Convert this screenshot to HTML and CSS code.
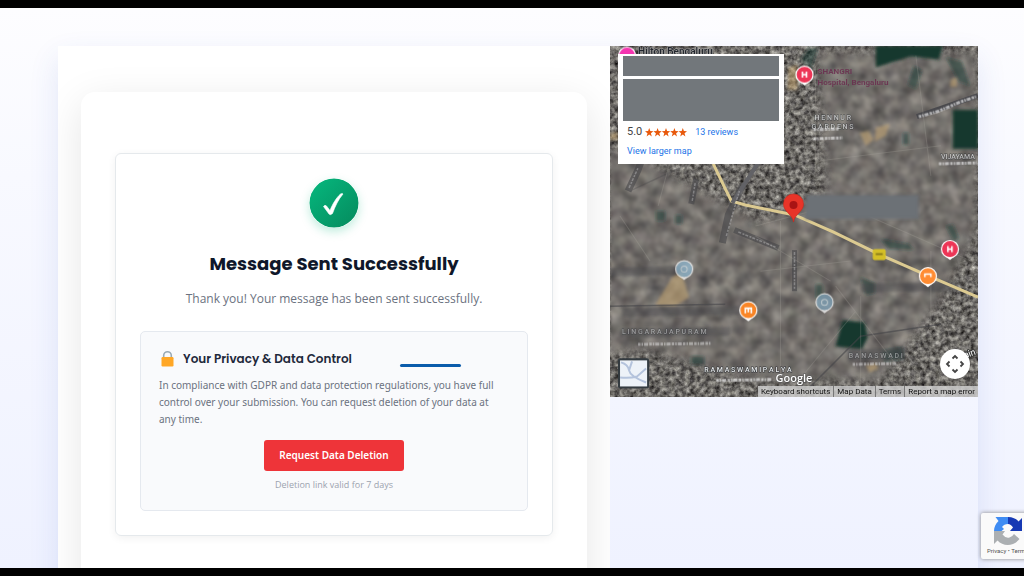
FILE: index.html
```html
<!DOCTYPE html>
<html lang="en">
<head>
<meta charset="utf-8">
<meta name="viewport" content="width=device-width, initial-scale=1">
<title>Message Sent Successfully</title>
<link rel="stylesheet" href="styles.css">
</head>
<body>
<main class="page">
  <div class="contact">
    <section class="form-column">
      <div class="form-card">
        <div class="message-card">
          <svg class="success-icon" viewBox="0 0 50 50" aria-hidden="true">
            <defs><linearGradient id="green" x1="0" y1="0" x2="1" y2="1"><stop offset="0" stop-color="#06b87e"/><stop offset="1" stop-color="#058a5d"/></linearGradient></defs>
            <circle cx="25" cy="25" r="24.5" fill="url(#green)"/>
            <path d="M14.500 28.500Q16 26.500 17.500 28L21 32.500C23.500 26 27.500 19.500 31.500 16Q33.500 14.800 34 16C29.500 21 26 28.500 23.500 35.500Q21.500 37.500 20 36Z" fill="#fff" stroke="#fff" stroke-width=".6" stroke-linejoin="round"/>
          </svg>
          <h1 class="title">Message Sent Successfully</h1>
          <p class="subtitle">Thank you! Your message has been sent successfully.</p>
          <section class="privacy">
            <h2 class="privacy-title">
              <svg class="lock" viewBox="0 0 16 18" aria-hidden="true"><path d="M4.200 8V5.500a3.800 3.800 0 0 1 7.600 0V8" fill="none" stroke="#9aaab5" stroke-width="1.600"/><rect x="2" y="7" width="12" height="9.500" rx="1.200" fill="#ffa726"/></svg>
              <span>Your Privacy &amp; Data Control</span>
            </h2>
            <p class="privacy-text">In compliance with GDPR and data protection regulations, you have full control over your submission. You can request deletion of your data at any time.</p>
            <button class="delete-button" type="button">Request Data Deletion</button>
            <p class="note">Deletion link valid for 7 days</p>
          </section>
        </div>
      </div>
    </section>
    <aside class="map-column">
      <div class="map">
        <svg class="map-canvas" viewBox="0 0 367 351" preserveAspectRatio="xMidYMid slice" role="img" aria-label="Satellite map">
          <defs>
            <filter id="fine" x="0" y="0" width="1" height="1" color-interpolation-filters="sRGB">
              <feTurbulence type="fractalNoise" baseFrequency=".2" numOctaves="3" seed="8"/>
              <feColorMatrix values=".85 .2 0 0 -.1 .85 .2 0 0 -.11 .8 .22 0 0 -.11 0 0 0 0 1"/>
              <feGaussianBlur stdDeviation=".5"/>
            </filter>
            <filter id="coarse" x="0" y="0" width="1" height="1" color-interpolation-filters="sRGB">
              <feTurbulence type="fractalNoise" baseFrequency=".08" numOctaves="3" seed="21"/>
              <feColorMatrix values=".4 .12 0 0 .19 .4 .09 0 0 .19 .36 .09 .03 0 .18 0 0 0 0 1"/>
              <feGaussianBlur stdDeviation="1.600"/>
            </filter>
            <filter id="soft" x="-20%" y="-20%" width="140%" height="140%"><feGaussianBlur stdDeviation="1.500"/></filter>
            <filter id="slight" x="-20%" y="-20%" width="140%" height="140%"><feGaussianBlur stdDeviation=".6"/></filter>
            <filter id="edge" x="-20%" y="-20%" width="140%" height="140%"><feGaussianBlur stdDeviation="5"/></filter>
            <mask id="hazy"><g fill="#fff" filter="url(#edge)"><path d="M205 5H367V185L330 255L270 335L140 335L35 305L-10 310V100L30 110L150 175L215 145Z"/></g></mask>
            <g id="pin"><path d="M-5 7L0 11L5 7Z" fill="#fff"/><circle r="8.500" stroke="#fff" stroke-width="1.200"/></g>
          </defs>
          <rect width="367" height="351" filter="url(#fine)"/>
          <g mask="url(#hazy)"><rect width="367" height="351" filter="url(#coarse)"/></g>
          <g fill="#19382f" filter="url(#soft)">
            <path d="M265 0H332L328 14L300 11L265 22ZM342 64H367V103H342ZM232 274L254 276L257 291L251 303L225 300Z"/>
            <g opacity=".5"><path d="M205 238H212V252H205ZM44 94l9 2-3 9-8-2ZM155 92l10 3-2 11-9-3ZM270 193L298 198L303 204L278 203ZM190 14l8-12h10l-8 23ZM292 87h6v12h-6ZM46 165h9v10h-9ZM65 169h7v9h-7ZM250 231l14 6v10l-9 2ZM335 12l16 4 8 24-11-4ZM303 20l8 5-6 18-8-4ZM81 310h13v8H81ZM272 304l20-3v12l-18 2ZM335 180l7-2 6 14-5 4Z"/></g>
          </g>
          <g fill="#c8a873" opacity=".55" filter="url(#soft)"><path d="M62 231l9-6 8 26-14 9-20-1ZM178 22l9-3v25h-10ZM265 82l14-4-4 12-11 6ZM0 88l8-2v8H0ZM249 87l9-2 5 9-8 6ZM340 34l6-2v9h-7ZM255 319l10-2 3 5-9 4Z"/></g>
          <g fill="none" stroke="#454548" opacity=".6" filter="url(#slight)">
            <path d="M20 145L85 115L134 128L159 88L205 45" stroke-width="1.500" opacity=".5"/>
            <path d="M18 145L28 124L33 110" stroke-width="7"/>
            <path d="M112 197L118 169L133 138" stroke-width="7"/>
            <path d="M81 158L86 133M124 184L168 202" stroke-width="6"/>
            <path d="M184 204V245" stroke-width="5"/>
            <path d="M198 342L250 290L330 278M0 260L115 258" stroke-width="1.500"/>
          </g>
          <g fill="none" stroke="#424247" opacity=".45" filter="url(#soft)">
            <path d="M0 226L70 224M250 242L345 240" stroke-width="9"/>
            <path d="M12 266L130 264M10 287L120 285" stroke-width="9"/>
            <path d="M238 309L295 307" stroke-width="12"/>
          </g>
          <path d="M306 71L367 50" stroke="#4a4a4e" stroke-width="5" filter="url(#slight)"/>
          <g fill="none" stroke="#aaa79f" opacity=".25" stroke-width="1" filter="url(#slight)"><path d="M205 20V125M235 160L367 218M225 240L310 350M175 350L245 265M10 170L40 215M100 95L180 60M305 10L320 130M210 115L330 100M250 250V340M320 205V344M145 190L220 235M145 180L220 160M60 115L48 160M170 175V330M150 225L240 215"/></g>
          <path d="M103 118L115 143L121 155L135 159L184 169L223 186L268 208L318 230L367 251" fill="none" stroke="#dcca91" stroke-width="3" filter="url(#slight)"/>
          <path d="M122 157L160 98" stroke="#626266" stroke-width="4" filter="url(#slight)"/>
          <g fill="none" stroke="#d9d9db" stroke-width="1.500" stroke-dasharray="3 1.500 2 1" opacity=".35" filter="url(#slight)">
            <path d="M19 142L28 122M116 190L129 145M82 155L85 137M128 186L165 201M184 206V243"/>
          </g>
          <g class="map-place" filter="url(#slight)">
            <text class="place-dark" x="28" y="9">Hilton Bengaluru</text>
            <g opacity=".65"><text x="204" y="74">H E N N U R</text><text x="201" y="83">G A R D E N S</text><text x="330" y="113">VIJAYAMA</text></g>
            <g opacity=".45"><text x="12" y="288">L I N G A R A J A P U R A M</text><text x="238" y="312">B A N A S W A D I</text></g>
            <text x="94" y="326">R A M A S W A M I P A L Y A</text>
          </g>
          <g fill="none" stroke="#eeeeef" stroke-width="3" stroke-dasharray="2.500 1 1.500 1 4 1.200" opacity=".65" filter="url(#slight)">
            <path d="M203 84L229 83M203 93L232 92M328 118L366 117"/>
            <path d="M28 298L101 297M242 318L286 317" opacity=".7"/>
            <path d="M106 334L162 333M308 71L326 66L350 56L365 51"/>
          </g>
          <g fill="#6b2c4e" opacity=".8" filter="url(#slight)"><text class="hotel" x="207" y="28">SHANGRI</text><text class="hotel" x="207" y="39">Hospital, Bengaluru</text></g>
          <g filter="url(#slight)">
            <use href="#pin" x="17" y="10" fill="#f536b0"/>
            <use href="#pin" x="194" y="29" fill="#ed3657"/>
            <use href="#pin" x="339" y="203" fill="#ed3657"/>
            <use href="#pin" x="317" y="230" fill="#ff8c31"/>
            <use href="#pin" x="138" y="264" fill="#f98525"/>
            <g opacity=".75"><use href="#pin" x="214" y="256" fill="#7ca1b7"/><use href="#pin" x="74" y="223" fill="#8db4cc"/><circle cx="214" cy="256" r="3" fill="none" stroke="#d7e6ed"/><circle cx="74" cy="223" r="3" fill="none" stroke="#d7e6ed"/></g>
            <g fill="none" stroke="#fff" stroke-width="1.600"><path d="M192 26v6M196 26v6M192 29h4M337 200v6M341 200v6M337 203h4"/><path d="M135 267v-5h6v5M138 262v4M314 231v-3h6v3"/></g>
            <rect x="262" y="203" width="13" height="11" rx="2" fill="#d4bf28"/><path d="M265 208h7" stroke="#8c7e1b" stroke-width="2"/>
          </g>
          <rect x="195" y="149" width="113" height="24" fill="#6c7176" filter="url(#soft)"/>
          <path d="M183 176C182 168 173 166 173 158a10 10 0 0 1 20 0c0 8-9 10-10 18Z" fill="#e83428" stroke="#c9271d" stroke-width=".6"/><circle cx="183" cy="159" r="4" fill="#a91314"/>
          <g><rect x="8" y="312" width="31" height="30" rx="2" fill="#343b40"/><rect x="10" y="314" width="27" height="26" fill="#edf2f8"/><path d="M11 316q7 2 8 8t17 12M19 324l3-9M10 331q10 1 17-1l9-8" fill="none" stroke="#b4c3dc" stroke-width="2"/></g>
          <text class="google" x="165" y="336">Google</text>
          <text class="road-name" x="354" y="312" transform="rotate(-20 354 312)">ain</text>
        </svg>
        <div class="place-card">
          <div class="redacted redacted-name"></div>
          <div class="redacted redacted-address"></div>
          <div class="rating"><span>5.0</span>
            <svg class="stars" viewBox="0 0 42 9" role="img" aria-label="Five stars"><defs><path id="star" d="M4.200 0L5.300 3.100L8.400 3.200L5.900 5.200L6.800 8.500L4.200 6.600L1.600 8.500L2.500 5.200L0 3.200L3.100 3.100Z"/></defs><g fill="#e8590c"><use href="#star"/><use href="#star" x="8.400"/><use href="#star" x="16.800"/><use href="#star" x="25.200"/><use href="#star" x="33.600"/></g></svg>
            <a href="#reviews">13 reviews</a>
          </div>
          <a class="larger" href="#map">View larger map</a>
        </div>
        <button class="camera" type="button" aria-label="Map camera controls"><svg viewBox="0 0 30 30" aria-hidden="true"><path d="M12.500 9.500L15 7L17.500 9.500M12.500 20.500L15 23L17.500 20.500M9.500 12.500L7 15L9.500 17.500M20.500 12.500L23 15L20.500 17.500" fill="none" stroke="#444" stroke-width="1.800"/></svg></button>
        <nav class="map-links" aria-label="Map information"><button type="button">Keyboard shortcuts</button><a href="#data">Map Data</a><a href="#terms">Terms</a><a href="#error">Report a map error</a></nav>
      </div>
    </aside>
  </div>
  <div class="recaptcha">
    <svg class="recaptcha-logo" viewBox="0 0 32 32" aria-hidden="true">
      <path d="M16 2H3.500L6.500 6C3.500 9 2 12 2 16H9.500L12 14L10 12Q12 9 16 9Z" fill="#3f8cf3"/>
      <path d="M16 2C21 2 24.500 4 26.500 6.500L30 3V16H18L21 12.500Q19 9 16 9Z" fill="#1639b4"/>
      <path d="M2 16H13L10.500 19.500Q13.500 23.500 17.500 22.500Q20.500 21.500 22 19L27.500 24C21 32 11 31.500 5.500 25.500L2 29Z" fill="#abafb2"/>
    </svg>
    <div class="recaptcha-links"><a href="#privacy">Privacy</a> • <a href="#terms">Terms</a></div>
  </div>
</main>
</body>
</html>
```
FILE: styles.css
```css
* { box-sizing: border-box; }
body { margin: 0; font-family: "Noto Sans", "Open Sans", sans-serif; color: #6b7280; }
h1, h2, p { margin: 0; }
a { color: inherit; text-decoration: none; }
button { border: 0; font: inherit; cursor: pointer; }

.page {
  position: relative;
  height: 100vh;
  overflow: hidden;
  border: solid #000;
  border-width: 8px 0;
  padding: 38px 46px 0 58px;
  background: linear-gradient(#fdfdff, #f8f9ff 30%, #eff2ff);
}
.contact { display: grid; grid-template-columns: 3fr 2fr; min-height: 100%; box-shadow: 0 12px 28px rgba(50, 80, 190, .12); }
.form-column { padding: 46px 23px; background: #fff; overflow: hidden; }
.form-card { padding: 61px 34px 80px; border-radius: 14px; background: #fff; box-shadow: 0 10px 40px rgba(0, 0, 0, .1); }
.message-card {
  display: flex;
  flex-direction: column;
  align-items: center;
  padding: 24px;
  border: 1px solid #e5e9ec;
  border-radius: 6px;
  box-shadow: 0 2px 8px rgba(0, 0, 0, .06);
}
.success-icon { width: 50px; height: 50px; border-radius: 50%; box-shadow: 0 4px 10px rgba(16, 185, 129, .25); }
.title { margin-top: 20px; font: 700 18px/32px "Poppins", "Open Sans", sans-serif; color: #0f172a; text-align: center; }
.subtitle { margin-top: 10px; font: 12px/18px "Open Sans", sans-serif; text-align: center; }
.privacy {
  display: flex;
  flex-direction: column;
  align-self: stretch;
  margin-top: 23px;
  padding: 18px;
  border: 1px solid #e5e9ef;
  border-radius: 5px;
  background: #f9fafc;
}
.privacy-title { display: flex; align-items: center; gap: 7px; font: 600 12px/18px "Poppins", Inter, sans-serif; color: #1e293b; }
.privacy-title::after { content: ""; width: 61px; height: 3px; margin: 13px 48px 0 auto; border-radius: 2px; background: #0b5cab; }
.lock { width: 17px; height: 18px; }
.privacy-text { margin-top: 9px; padding-right: 8px; font-size: 10px; line-height: 17px; }
.delete-button { align-self: center; margin-top: 12px; padding: 0 15px; border-radius: 3px; background: #ee3439; color: #fff; font-size: 10px; font-weight: 600; line-height: 31px; }
.note { margin-top: 6px; font: 9px/15px "Open Sans", sans-serif; color: #9ca3af; text-align: center; }

.map { position: relative; overflow: hidden; }
.map-canvas { display: block; width: 100%; height: 351px; }
.map-place text { font: 500 7px Roboto, sans-serif; fill: #e5e7e8; paint-order: stroke; stroke: #303438; stroke-width: 1px; }
.map-place .place-dark { font-size: 10px; fill: #24282e; stroke: #a9a9aa; }
.hotel { font: 700 8px Roboto, sans-serif; }
.google { font: 600 11px "Open Sans", sans-serif; fill: #fff; paint-order: stroke; stroke: #555; stroke-width: 1px; }
.road-name { font: 9px Roboto, sans-serif; fill: #fff; paint-order: stroke; stroke: #333; stroke-width: 2px; }
.place-card { position: absolute; top: 8px; left: 8px; width: 166px; padding: 2px 5px 6px; background: #fff; font: 10px/14px Roboto, sans-serif; color: #444; }
.redacted { background: #72777b; }
.redacted-name { height: 20px; }
.redacted-address { height: 42px; margin-top: 3px; }
.rating { display: flex; align-items: center; margin: 4px 4px 5px; font-size: 11px; }
.stars { width: 42px; height: 9px; margin: 0 8px 0 3px; }
.place-card a { color: #1a73e8; font-size: 9px; }
.larger { margin-left: 4px; }
.camera { position: absolute; right: 8px; bottom: 18px; width: 30px; height: 30px; padding: 0; border-radius: 50%; background: #fff; }
.camera svg { display: block; }
.map-links { position: absolute; right: 0; bottom: 0; display: flex; font: 8px/11px Roboto, sans-serif; color: #111; }
.map-links > * { padding: 0 3px; background: rgba(210, 210, 210, .8); color: inherit; }
.map-links > * + * { border-left: 1px solid #777; }

.recaptcha { position: absolute; right: -10px; bottom: 9px; width: 53px; height: 46px; padding-top: 2px; border-radius: 2px; background: #fafafa; box-shadow: 0 0 4px #888; text-align: center; }
.recaptcha-logo { display: block; width: 32px; height: 32px; margin: 0 auto; }
.recaptcha-links { font: 6px/8px Roboto, sans-serif; color: #555; white-space: nowrap; }
```
